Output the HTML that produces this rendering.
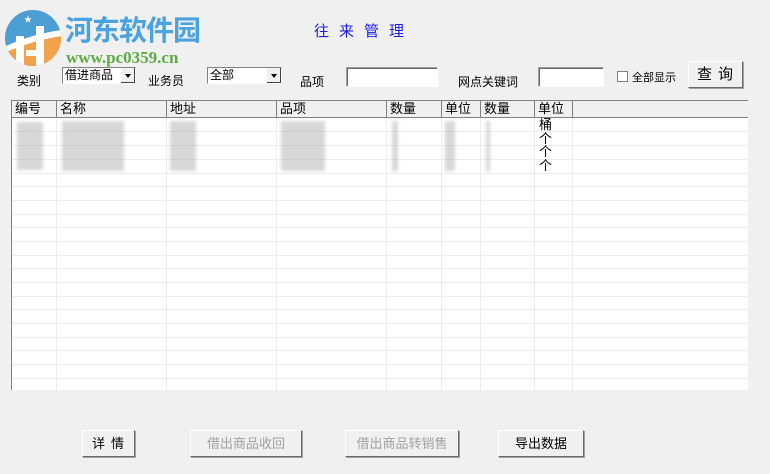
<!DOCTYPE html>
<html><head><meta charset="utf-8"><style>
body{margin:0;width:770px;height:474px;background:#f0f0f0;position:relative;overflow:hidden;font-family:"Liberation Sans","Noto Sans CJK SC",sans-serif;font-size:12px;color:#000}
.a{position:absolute;white-space:nowrap}
.combo{position:absolute;background:#fff;border-top:1px solid #808080;border-left:1px solid #808080;border-right:1px solid #fff;border-bottom:1px solid #fff;height:15px;font-size:12px;line-height:15px;padding-left:2px;box-sizing:content-box}
.combo .ar{position:absolute;right:0;top:0;width:14px;height:15px;background:#f0f0f0;border-left:1px solid #fff;box-shadow:inset -1px -1px #404040}
.combo .ar:after{content:"";position:absolute;left:4px;top:6px;border-left:3px solid transparent;border-right:3px solid transparent;border-top:4px solid #000}
.inp{position:absolute;background:#fff;border-top:1px solid #a0a0a0;border-left:1px solid #a0a0a0;border-right:1px solid #fff;border-bottom:1px solid #fff;box-shadow:inset 1px 1px #696969}
.btn{position:absolute;background:#f0f0f0;border-top:1px solid #fff;border-left:1px solid #fff;border-right:1px solid #696969;border-bottom:1px solid #696969;box-shadow:1px 1px #a0a0a0;box-sizing:border-box;text-align:center;font-size:13px}
.grid{position:absolute;left:11px;top:100px;width:737px;height:290px;background:#fff;border-top:1px solid #808080;border-left:1px solid #808080;box-sizing:border-box;overflow:hidden}
.hd{position:absolute;top:0;height:17px;border-right:1px solid #808080;border-bottom:1px solid #808080;background:#f0f0f0;box-sizing:border-box;padding-left:3px;font-size:13px;line-height:16px}
.vl{position:absolute;top:17px;bottom:0;width:1px;background:#ececec}
.hl{position:absolute;left:0;right:0;height:1px;background:#ececec}
.blur{position:absolute;background:#a8a8a8;filter:blur(1.5px);opacity:.45}
</style></head><body>
<svg class="a" style="left:4px;top:10px" width="60" height="58" viewBox="0 0 60 58">
<clipPath id="c"><circle cx="29" cy="28" r="28"/></clipPath>
<g clip-path="url(#c)">
<rect x="0" y="0" width="60" height="58" fill="#4b9fd5"/>
<path d="M0 38 Q30 30 60 22 L60 60 L0 60Z" fill="#f2a24a"/>
<path d="M2 36 Q28 24 58 20 L58 26 Q30 30 2 42Z" fill="#fff"/>
<rect x="12" y="26" width="8" height="30" fill="#fff"/>
<rect x="32" y="16" width="8" height="40" fill="#fff"/>
<rect x="22" y="40" width="10" height="6" fill="#fff"/>
</g>
<text x="20" y="12" font-size="8" fill="#fff">★</text>
</svg>
<div class="a" style="left:65px;top:9px;font-size:28px;font-weight:bold;color:#4aa3e0;font-family:'Noto Sans CJK SC',sans-serif;letter-spacing:-1px">河东软件园</div>
<div class="a" style="left:66px;top:48px;font-size:17px;font-weight:bold;color:#5aac44;font-family:'Liberation Serif',serif">www.pc0359.cn</div>
<div class="a" style="left:314px;top:20px;font-size:15px;color:#1a1ae8;letter-spacing:10px">往来管理</div>

<div class="a" style="left:17px;top:72px">类别</div>
<div class="combo" style="left:62px;top:67px;width:70px">借进商品<div class="ar"></div></div>
<div class="a" style="left:148px;top:72px">业务员</div>
<div class="combo" style="left:207px;top:67px;width:71px">全部<div class="ar"></div></div>
<div class="a" style="left:300px;top:73px">品项</div>
<div class="inp" style="left:346px;top:67px;width:90px;height:18px"></div>
<div class="a" style="left:458px;top:73px">网点关键词</div>
<div class="inp" style="left:538px;top:67px;width:64px;height:18px"></div>
<div class="a" style="left:617px;top:71px;width:9px;height:9px;background:#fff;border:1px solid #808080"></div>
<div class="a" style="left:632px;top:69px;font-size:11px">全部显示</div>
<div class="btn" style="left:688px;top:61px;width:55px;height:27px;font-size:15px;line-height:25px;letter-spacing:6px;padding-left:5px">查询</div>

<div class="grid">
<div class="hd" style="left:0;width:45px">编号</div>
<div class="hd" style="left:45px;width:110px">名称</div>
<div class="hd" style="left:155px;width:110px">地址</div>
<div class="hd" style="left:265px;width:110px">品项</div>
<div class="hd" style="left:375px;width:55px">数量</div>
<div class="hd" style="left:430px;width:39px">单位</div>
<div class="hd" style="left:469px;width:54px">数量</div>
<div class="hd" style="left:523px;width:38px">单位</div>
<div class="hd" style="left:561px;width:180px;border-right:none"></div>
<div class="vl" style="left:44px"></div><div class="vl" style="left:154px"></div><div class="vl" style="left:264px"></div><div class="vl" style="left:374px"></div><div class="vl" style="left:429px"></div><div class="vl" style="left:468px"></div><div class="vl" style="left:522px"></div><div class="vl" style="left:560px"></div>
<div class="hl" style="top:30px"></div><div class="hl" style="top:44px"></div><div class="hl" style="top:58px"></div><div class="hl" style="top:72px"></div><div class="hl" style="top:85px"></div><div class="hl" style="top:99px"></div><div class="hl" style="top:113px"></div><div class="hl" style="top:126px"></div><div class="hl" style="top:140px"></div><div class="hl" style="top:154px"></div><div class="hl" style="top:167px"></div><div class="hl" style="top:181px"></div><div class="hl" style="top:195px"></div><div class="hl" style="top:208px"></div><div class="hl" style="top:222px"></div><div class="hl" style="top:236px"></div><div class="hl" style="top:249px"></div><div class="hl" style="top:263px"></div><div class="hl" style="top:277px"></div>
<div class="blur" style="left:5px;top:21px;width:26px;height:48px"></div>
<div class="blur" style="left:50px;top:20px;width:62px;height:50px"></div>
<div class="blur" style="left:158px;top:20px;width:26px;height:50px"></div>
<div class="blur" style="left:269px;top:20px;width:44px;height:50px"></div>
<div class="blur" style="left:380px;top:20px;width:6px;height:50px"></div>
<div class="blur" style="left:433px;top:20px;width:10px;height:50px"></div>
<div class="blur" style="left:474px;top:20px;width:4px;height:50px"></div>
<div class="a" style="left:527px;top:17px;font-size:13px;line-height:13.5px">桶<br>个<br>个<br>个</div>
</div>

<div class="btn" style="left:82px;top:430px;width:53px;height:27px;line-height:25px;letter-spacing:6px;padding-left:5px">详情</div>
<div class="btn" style="left:190px;top:430px;width:112px;height:27px;line-height:25px;color:#a0a0a0">借出商品收回</div>
<div class="btn" style="left:345px;top:430px;width:114px;height:27px;line-height:25px;color:#a0a0a0">借出商品转销售</div>
<div class="btn" style="left:498px;top:430px;width:86px;height:27px;line-height:25px">导出数据</div>
</body></html>
